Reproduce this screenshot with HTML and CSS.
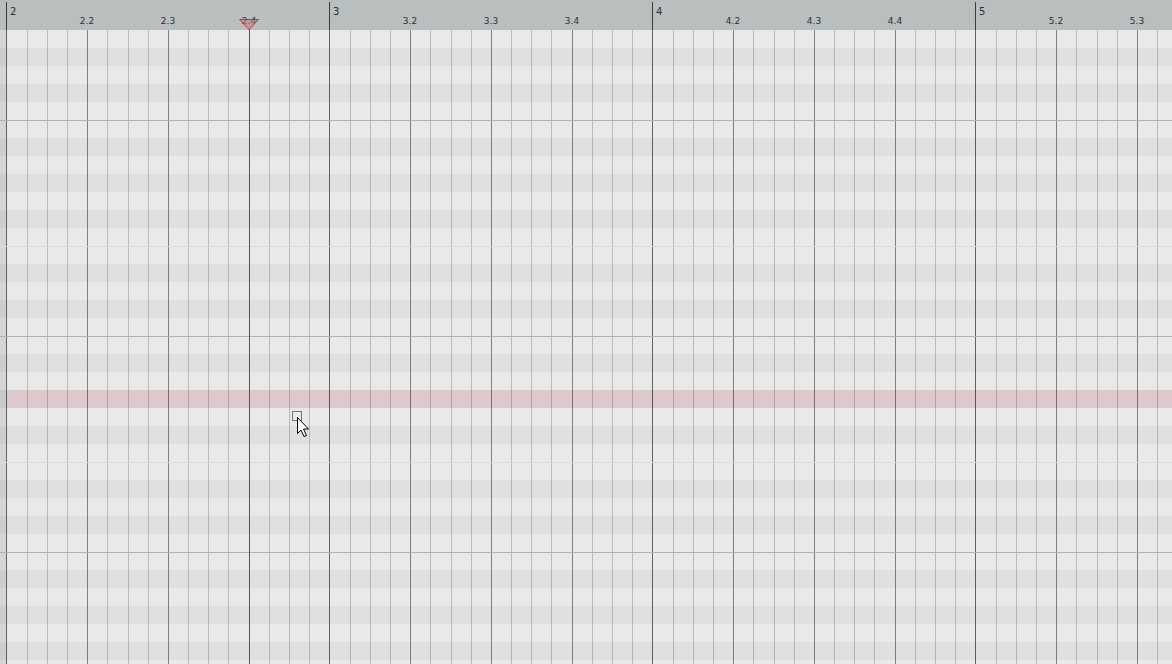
FILE: index.html
```html
<!DOCTYPE html>
<html lang="en">
<head>
<meta charset="utf-8">
<title>Piano roll</title>
<link rel="stylesheet" href="styles.css">
</head>
<body>
<div class="roll">
  <div class="ruler">
    <div class="lead"></div>
    <div class="bar">
      <div class="beat first"><span class="num">2</span></div>
      <div class="beat"><span class="lbl">2.2</span></div>
      <div class="beat"><span class="lbl">2.3</span></div>
      <div class="beat"><span class="lbl">2.4</span></div>
    </div>
    <div class="bar">
      <div class="beat first"><span class="num">3</span></div>
      <div class="beat"><span class="lbl">3.2</span></div>
      <div class="beat"><span class="lbl">3.3</span></div>
      <div class="beat"><span class="lbl">3.4</span></div>
    </div>
    <div class="bar">
      <div class="beat first"><span class="num">4</span></div>
      <div class="beat"><span class="lbl">4.2</span></div>
      <div class="beat"><span class="lbl">4.3</span></div>
      <div class="beat"><span class="lbl">4.4</span></div>
    </div>
    <div class="bar">
      <div class="beat first"><span class="num">5</span></div>
      <div class="beat"><span class="lbl">5.2</span></div>
      <div class="beat wide"><span class="lbl">5.3</span></div>
      <div class="beat"></div>
    </div>
  </div>

  <div class="grid">
    <div class="row w"></div>
    <div class="row b"></div>
    <div class="row w"></div>
    <div class="row b"></div>
    <div class="row w"></div>

    <div class="row w oct"></div>
    <div class="row b"></div>
    <div class="row w"></div>
    <div class="row b"></div>
    <div class="row w"></div>
    <div class="row b"></div>
    <div class="row w"></div>
    <div class="row w ef"></div>
    <div class="row b"></div>
    <div class="row w"></div>
    <div class="row b"></div>
    <div class="row w"></div>

    <div class="row w oct"></div>
    <div class="row b"></div>
    <div class="row w"></div>
    <div class="row hl"></div>
    <div class="row w"></div>
    <div class="row b"></div>
    <div class="row w"></div>
    <div class="row w ef"></div>
    <div class="row b"></div>
    <div class="row w"></div>
    <div class="row b"></div>
    <div class="row w"></div>

    <div class="row w oct"></div>
    <div class="row b"></div>
    <div class="row w"></div>
    <div class="row b"></div>
    <div class="row w"></div>
    <div class="row b"></div>
    <div class="row w"></div>
  </div>

  <svg class="playhead-head" width="22" height="13" viewBox="0 0 22 13">
    <polygon points="1.5,1.5 20.5,1.5 11,11.5" fill="rgba(196,120,124,0.55)" stroke="#c8353a" stroke-width="1"/>
  </svg>
  <div class="playhead-line"></div>

  <svg class="cursor" width="20" height="28" viewBox="0 0 20 28">
    <rect x="0.5" y="0.5" width="9" height="9" fill="none" stroke="#000" stroke-width="1" stroke-dasharray="1 1"/>
    <path d="M5.5 6.5 L5.5 22.5 L9 19 L12 25.5 L14.5 24.5 L11.5 18 L16.5 18 Z" fill="#fff" stroke="#000" stroke-width="1" stroke-linejoin="miter"/>
  </svg>
</div>
</body>
</html>
```

FILE: styles.css
```css
html, body {
  margin: 0;
  padding: 0;
  width: 1172px;
  height: 664px;
  overflow: hidden;
  background: #e9e9e9;
}

.roll {
  position: relative;
  width: 1172px;
  height: 664px;
  overflow: hidden;
  display: flex;
  flex-direction: column;
  font-family: "DejaVu Sans", "Liberation Sans", sans-serif;
}

/* ---------- ruler ---------- */
.ruler {
  height: 30px;
  flex: none;
  display: flex;
  background: #b9bfbe;
  overflow: hidden;
}

.lead {
  width: 6px;
  flex: none;
}

.bar {
  width: 323px;
  height: 28px;
  flex: none;
  box-sizing: border-box;
  margin-top: 2px;
  border-left: 1px solid #3c3c3c;
  display: grid;
  grid-template-columns: 80px 81px 81px 80px;
}

.beat {
  display: flex;
  align-items: flex-start;
  padding-top: 15px;
}

.beat.first {
  padding-top: 5px;
  padding-left: 3px;
}

.num {
  display: block;
  font-size: 10px;
  line-height: 10px;
  color: #2e3238;
}

.lbl {
  display: block;
  flex: none;
  font-size: 9px;
  line-height: 9px;
  color: #2e3238;
  transform: translateX(-50%);
  white-space: nowrap;
}

/* ---------- grid ---------- */
.grid {
  flex: 1;
  display: flex;
  flex-direction: column;
}

.row {
  --minor: rgba(0, 0, 0, 0.2);
  --beatc: rgba(0, 0, 0, 0.45);
  --barc: rgba(0, 0, 0, 0.58);
  --strip: rgba(0, 0, 0, 0.085);
  height: 18px;
  flex: none;
  box-sizing: border-box;
  background-image:
    linear-gradient(to right,
      var(--barc) 0 1px, transparent 1px 21px,
      var(--minor) 21px 22px, transparent 22px 41px,
      var(--minor) 41px 42px, transparent 42px 61px,
      var(--minor) 61px 62px, transparent 62px 81px,
      var(--beatc) 81px 82px, transparent 82px 101px,
      var(--minor) 101px 102px, transparent 102px 122px,
      var(--minor) 122px 123px, transparent 123px 142px,
      var(--minor) 142px 143px, transparent 143px 162px,
      var(--beatc) 162px 163px, transparent 163px 182px,
      var(--minor) 182px 183px, transparent 183px 202px,
      var(--minor) 202px 203px, transparent 203px 222px,
      var(--minor) 222px 223px, transparent 223px 243px,
      var(--beatc) 243px 244px, transparent 244px 263px,
      var(--minor) 263px 264px, transparent 264px 283px,
      var(--minor) 283px 284px, transparent 284px 303px,
      var(--minor) 303px 304px, transparent 304px 323px),
    linear-gradient(var(--strip), var(--strip));
  background-size: 323px 100%, 6px 100%;
  background-position: 6px 0, 0 0;
  background-repeat: repeat-x, no-repeat;
}

.row.w { background-color: #e9e9e9; }
.row.b { background-color: #e0e0e0; }
.row.hl {
  background-color: #dcc9cb;
  --strip: #c9c9c9;
}

.row.oct { border-top: 1px solid #b2b2b2; }
.row.ef { border-top: 1px solid #dadada; }

/* ---------- overlays ---------- */
.playhead-head {
  position: absolute;
  left: 238px;
  top: 18px;
}

.playhead-line {
  position: absolute;
  left: 249px;
  top: 29px;
  bottom: 0;
  width: 1px;
  background: #a83236;
}

.cursor {
  position: absolute;
  left: 292px;
  top: 411px;
}
```
